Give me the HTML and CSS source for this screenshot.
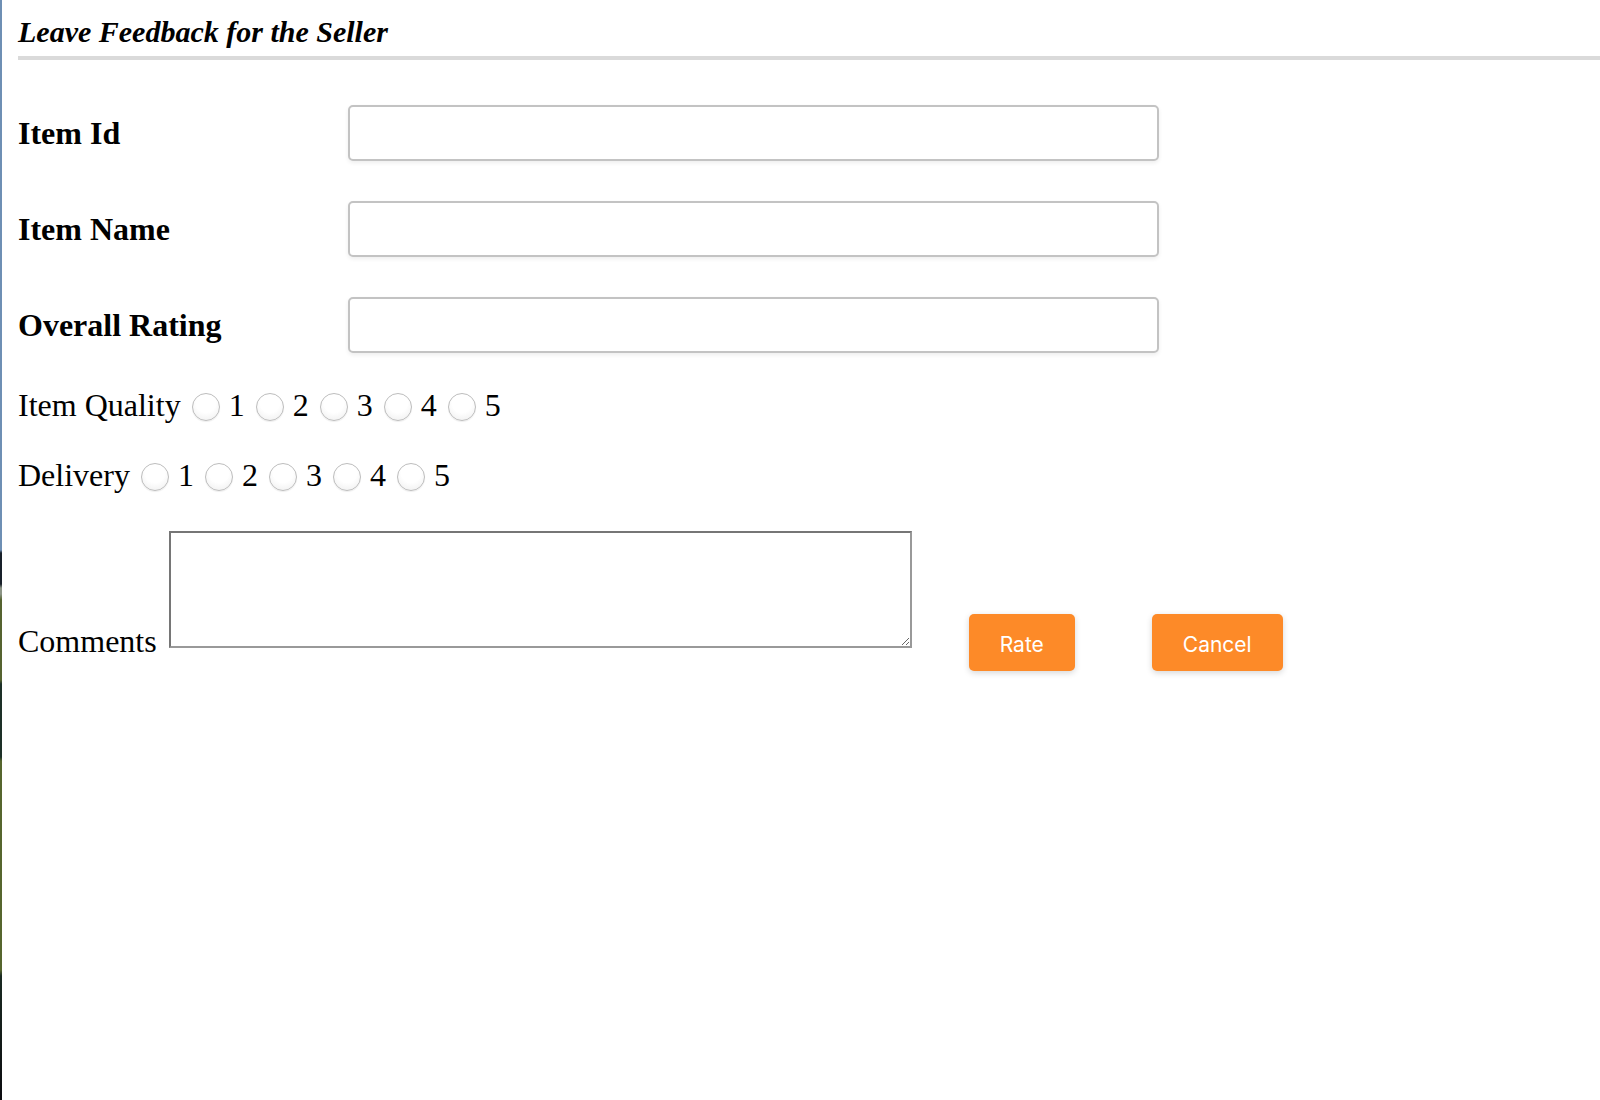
FILE: index.html
```html
<!DOCTYPE html>
<html lang="en">
<head>
<meta charset="utf-8">
<title>Leave Feedback for the Seller</title>
<link rel="stylesheet" href="styles.css">
</head>
<body>
<div class="page">
  <div class="edge"></div>
  <main class="content">
    <h1 class="title">Leave Feedback for the Seller</h1>
    <form class="form">
      <div class="field">
        <label class="field-label" for="item-id">Item Id</label>
        <input class="text-input" id="item-id" type="text">
      </div>
      <div class="field">
        <label class="field-label" for="item-name">Item Name</label>
        <input class="text-input" id="item-name" type="text">
      </div>
      <div class="field">
        <label class="field-label" for="overall">Overall Rating</label>
        <input class="text-input" id="overall" type="text">
      </div>
      <p class="rating">Item Quality <input class="radio" type="radio" name="quality" value="1"> 1 <input class="radio" type="radio" name="quality" value="2"> 2 <input class="radio" type="radio" name="quality" value="3"> 3 <input class="radio" type="radio" name="quality" value="4"> 4 <input class="radio" type="radio" name="quality" value="5"> 5</p>
      <p class="rating rating-next">Delivery <input class="radio" type="radio" name="delivery" value="1"> 1 <input class="radio" type="radio" name="delivery" value="2"> 2 <input class="radio" type="radio" name="delivery" value="3"> 3 <input class="radio" type="radio" name="delivery" value="4"> 4 <input class="radio" type="radio" name="delivery" value="5"> 5</p>
      <p class="comments">Comments <textarea class="comment-box"></textarea><button class="btn btn-rate" type="button">Rate</button><button class="btn btn-cancel" type="button">Cancel</button></p>
    </form>
  </main>
</div>
</body>
</html>
```
FILE: styles.css
```css
html, body {
  margin: 0;
  padding: 0;
  background: #ffffff;
}

.page {
  display: flex;
  min-height: 1100px;
  font-family: "Liberation Serif", "Times New Roman", serif;
  color: #000;
}

.edge {
  width: 2px;
  flex: none;
  background: linear-gradient(to bottom,
    #6e8fb4 0, #6e8fb4 550px,
    #18202a 553px, #18202a 584px,
    #8c9486 588px, #8c9486 594px,
    #556330 600px, #556330 680px,
    #1d3028 684px, #1d3028 757px,
    #56662e 761px, #56662e 970px,
    #1a2a22 976px, #0c0c10 1100px);
}

.content {
  flex: 1;
  padding-left: 16px;
}

.title {
  margin: 0;
  padding: 15px 0 7px;
  font-size: 30px;
  line-height: 34px;
  font-weight: bold;
  font-style: italic;
  border-bottom: 4px solid #dadada;
}

.form {
  margin: 45px 0 0;
}

.field {
  display: flex;
  align-items: center;
  height: 56px;
  margin-bottom: 40px;
}

.field:last-of-type {
  margin-bottom: 0;
}

.field-label {
  width: 330px;
  flex: none;
  font-size: 32px;
  font-weight: bold;
}

.text-input {
  box-sizing: border-box;
  width: 811px;
  height: 56px;
  margin: 0;
  border: 2px solid #c3c3c3;
  border-radius: 5px;
  background: #fff;
  box-shadow: 0 2px 4px rgba(0, 0, 0, 0.07);
  outline: none;
}

.rating {
  margin: 34px 0 0;
  font-size: 32px;
}

.rating-next {
  margin-top: 33px;
}

.radio {
  appearance: none;
  -webkit-appearance: none;
  box-sizing: border-box;
  width: 28px;
  height: 28px;
  margin: 0 1px 0 3px;
  border: 1px solid #bdbdbd;
  border-radius: 50%;
  background: radial-gradient(circle at 50% 35%, #ffffff 45%, #ececec 100%);
  box-shadow: 0 1px 1px rgba(0, 0, 0, 0.07);
  vertical-align: -5px;
}

.comments {
  margin: 30px 0 0;
  font-size: 32px;
}

.comment-box {
  box-sizing: border-box;
  width: 743px;
  height: 117px;
  margin: 7px 0 4px 4px;
  border: 2px solid;
  border-color: #767676 #999999 #999999 #767676;
  padding: 2px;
  resize: both;
  vertical-align: baseline;
  font-family: "Liberation Mono", monospace;
}

.btn {
  display: inline-block;
  box-sizing: border-box;
  height: 57px;
  padding: 18px 31px 14px;
  border: none;
  border-radius: 5px;
  background: #fd8a28;
  color: #ffffff;
  font-family: Inter, "Noto Sans", sans-serif;
  font-size: 21px;
  line-height: 25px;
  box-shadow: 0 2px 6px rgba(0, 0, 0, 0.16);
  vertical-align: baseline;
}

.btn-rate {
  margin-left: 57px;
}

.btn-cancel {
  margin-left: 77px;
  padding-left: 31px;
  padding-right: 31px;
}
```
